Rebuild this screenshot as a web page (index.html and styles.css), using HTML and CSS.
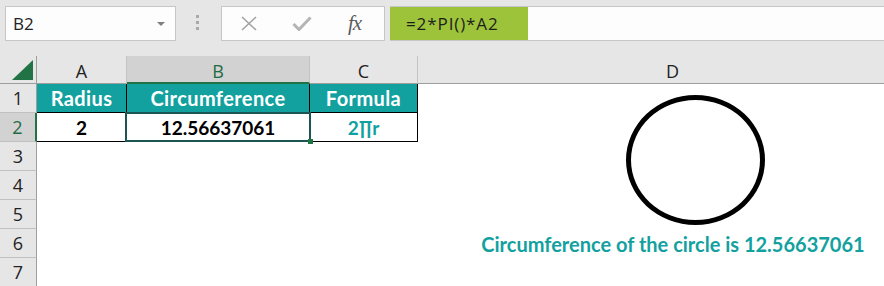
FILE: index.html
```html
<!DOCTYPE html>
<html lang="en">
<head>
    <meta charset="UTF-8">
    <meta name="viewport" content="width=device-width, initial-scale=1.0">
    <title>Circumference - Excel</title>
    <link rel="stylesheet" href="styles.css">
</head>
<body>
    <div class="formula-bar">
        <div class="name-box">
            <span>B2</span>
            <span class="drop-arrow"></span>
        </div>
        <div class="grip"><i></i><i></i><i></i></div>
        <div class="fx-box">
            <svg class="icon-x" width="18" height="15" viewBox="0 0 18 15">
                <path d="M2 1 L16 14 M16 1 L2 14" stroke="#a3a3a3" stroke-width="1.6" fill="none"/>
            </svg>
            <svg class="icon-check" width="20" height="15" viewBox="0 0 20 15">
                <path d="M1.5 8 L7 13.5 L18.5 1.5" stroke="#b5b5b5" stroke-width="3" fill="none"/>
            </svg>
            <span class="fx">fx</span>
        </div>
        <div class="formula-input">
            <span class="formula-text">=2*PI()*A2</span>
        </div>
    </div>

    <div class="sheet">
        <!-- column headers -->
        <div class="col-head corner"><span class="corner-tri"></span></div>
        <div class="col-head">A</div>
        <div class="col-head sel">B</div>
        <div class="col-head">C</div>
        <div class="col-head">D</div>

        <div class="row-head">1</div>
        <div class="cell title">Radius</div>
        <div class="cell title">Circumference</div>
        <div class="cell title">Formula</div>
        <div class="blank"></div>

        <div class="row-head sel">2</div>
        <div class="cell">2</div>
        <div class="cell active">12.56637061</div>
        <div class="cell teal">2∏r</div>
        <div class="blank"></div>

        <div class="row-head">3</div>
        <div class="blank"></div><div class="blank"></div><div class="blank"></div><div class="blank"></div>

        <div class="row-head">4</div>
        <div class="blank"></div><div class="blank"></div><div class="blank"></div><div class="blank"></div>

        <div class="row-head">5</div>
        <div class="blank"></div><div class="blank"></div><div class="blank"></div><div class="blank"></div>

        <div class="row-head">6</div>
        <div class="blank"></div><div class="blank"></div><div class="blank"></div>
        <div class="blank result">Circumference of the circle is 12.56637061</div>

        <div class="row-head">7</div>
        <div class="blank"></div><div class="blank"></div><div class="blank"></div><div class="blank"></div>

        <!-- drawn shape floating over the sheet -->
        <div class="circle-shape"></div>
    </div>
</body>
</html>
```

FILE: styles.css
```css
* {
    box-sizing: border-box;
}
html, body {
    margin: 0;
    width: 884px;
    height: 286px;
    overflow: hidden;
    background-color: #fff;
}
body {
    font-family: "Segoe UI", "Open Sans", sans-serif;
    color: #222;
}

/* formula bar */
.formula-bar {
    display: flex;
    align-items: flex-start;
    height: 56px;
    padding-top: 6px;
    background-color: #e6e6e6;
}
.name-box {
    display: flex;
    align-items: center;
    justify-content: space-between;
    width: 171px;
    height: 35px;
    margin-left: 5px;
    padding: 0 10px 0 7px;
    border: 1px solid #c6c6c6;
    background-color: #fdfdfd;
    font-size: 17px;
}
.drop-arrow {
    width: 0;
    height: 0;
    border-left: 4px solid transparent;
    border-right: 4px solid transparent;
    border-top: 4px solid #7f7f7f;
}
.grip {
    display: flex;
    flex-direction: column;
    gap: 3px;
    width: 3px;
    margin: 9px 22px 0 20px;
}
.grip i {
    display: block;
    width: 3px;
    height: 3px;
    background-color: #a9a9a9;
}
.fx-box {
    display: flex;
    align-items: center;
    width: 164px;
    height: 35px;
    padding-left: 18px;
    border: 1px solid #c6c6c6;
    background-color: #fdfdfd;
}
.icon-check {
    margin-left: 34px;
}
.fx {
    margin-left: 36px;
    font-family: "Liberation Serif", serif;
    font-style: italic;
    font-size: 21px;
    color: #5b5b5b;
    letter-spacing: -1px;
}
.formula-input {
    flex: 1;
    height: 35px;
    margin-left: 5px;
    margin-right: -2px;
    border: 1px solid #c6c6c6;
    border-left: none;
    background-color: #fdfdfd;
}
.formula-text {
    display: inline-flex;
    align-items: center;
    width: 138px;
    height: 100%;
    padding-left: 16px;
    background-color: #9dc33b;
    font-size: 17px;
    letter-spacing: 0.9px;
    color: #1e1e1e;
}

/* sheet grid */
.sheet {
    position: relative;
    display: grid;
    grid-template-columns: 37px 90px 183px 108px 510px;
    grid-template-rows: 28px repeat(7, 29px);
}
.col-head {
    display: flex;
    align-items: center;
    justify-content: center;
    padding-top: 3px;
    background-color: #e6e6e6;
    border-right: 1px solid #c4c4c4;
    border-bottom: 1px solid #9e9e9e;
    font-size: 18px;
}
.col-head.sel {
    background-color: #d2d2d2;
    color: #1f6b44;
    border-bottom: 2px solid #217346;
}
.corner {
    position: relative;
    border-right: 1px solid #9e9e9e;
}
.corner-tri {
    position: absolute;
    right: 3px;
    bottom: 3px;
    width: 0;
    height: 0;
    border-left: 21px solid transparent;
    border-bottom: 20px solid #217346;
}
.row-head {
    display: flex;
    align-items: center;
    justify-content: center;
    background-color: #e6e6e6;
    border-right: 1px solid #9e9e9e;
    border-bottom: 1px solid #c0c0c0;
    font-size: 18px;
}
.row-head.sel {
    background-color: #d2d2d2;
    color: #1f6b44;
    border-right: 2px solid #217346;
}

.cell {
    display: flex;
    align-items: center;
    justify-content: center;
    border-right: 1px solid #000;
    border-bottom: 1px solid #000;
    font-family: Lato, "Open Sans", sans-serif;
    font-weight: bold;
    font-size: 19px;
    color: #000;
}
.cell.title {
    background-color: #12a19f;
    color: #fff;
    font-size: 20px;
    letter-spacing: 0.4px;
}
.cell.teal {
    color: #12a19f;
}
.cell.active {
    position: relative;
}
.cell.active::after {
    content: "";
    position: absolute;
    top: -1px;
    left: -2px;
    right: -2px;
    bottom: -1px;
    border: 2px solid #1b5654;
}
.cell.active::before {
    content: "";
    position: absolute;
    right: -4px;
    bottom: -3px;
    width: 5px;
    height: 5px;
    background-color: #217346;
    z-index: 1;
}
.blank {
    background-color: #fff;
}
.result {
    display: flex;
    align-items: center;
    justify-content: center;
    font-family: Lato, "Open Sans", sans-serif;
    font-weight: bold;
    font-size: 20px;
    color: #12a19f;
}
.circle-shape {
    position: absolute;
    left: 626px;
    top: 39px;
    width: 139px;
    height: 130px;
    border: 5px solid #000;
    border-radius: 50%;
}
```
